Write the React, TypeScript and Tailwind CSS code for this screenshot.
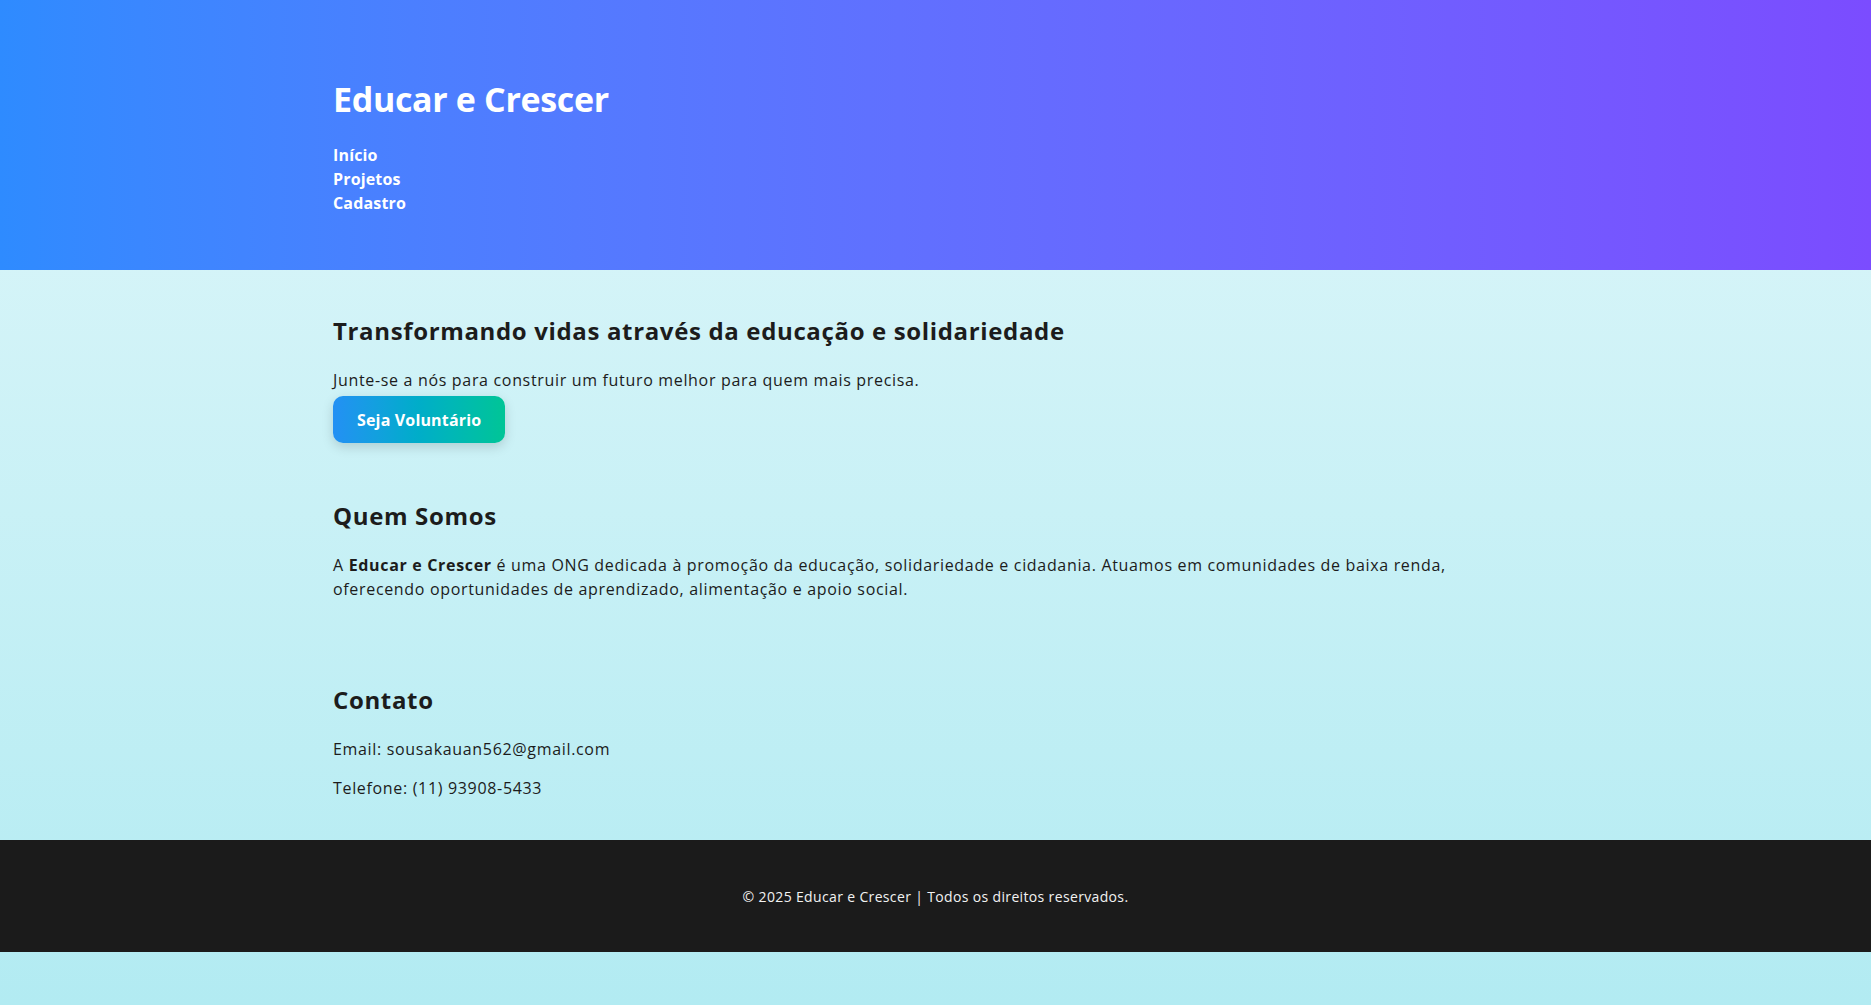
export default function App() {
  const font = { fontFamily: '"Open Sans", "Noto Sans", Arial, sans-serif' };

  return (
    <div
      className="min-h-screen bg-gradient-to-b from-[#e0f7fa] to-[#b2ebf2] text-[#1c1c1c]"
      style={font}
    >
      <header className="bg-gradient-to-r from-[#2e8bff] to-[#7b4cff] text-white">
        <div className="w-[1205px] mx-auto pt-[76px] pb-[55px]">
          <h1 className="text-[34px] leading-[46px] font-bold tracking-[-0.01em]">Educar e Crescer</h1>
          <nav className="mt-[21px]">
            <ul className="flex flex-col">
              <li>
                <a href="#inicio" className="text-[16px] leading-[24px] font-bold tracking-[0.01em]">
                  Início
                </a>
              </li>
              <li>
                <a href="#projetos" className="text-[16px] leading-[24px] font-bold tracking-[0.01em]">
                  Projetos
                </a>
              </li>
              <li>
                <a href="#cadastro" className="text-[16px] leading-[24px] font-bold tracking-[0.01em]">
                  Cadastro
                </a>
              </li>
            </ul>
          </nav>
        </div>
      </header>

      <main className="w-[1205px] mx-auto">
        <section className="pt-[43px]">
          <h2 className="text-[24px] leading-[36px] font-bold tracking-[0.027em]">
            Transformando vidas através da educação e solidariedade
          </h2>
          <p className="mt-[19px] text-[16px] leading-[24px] tracking-[0.042em]">
            Junte-se a nós para construir um futuro melhor para quem mais precisa.
          </p>
          <button className="mt-[4px] h-[47px] px-[24px] rounded-[10px] bg-gradient-to-r from-[#2390f4] to-[#00c596] text-white text-[16px] font-bold tracking-[0.01em] shadow-[0_4px_12px_rgba(0,0,0,0.15)]">
            Seja Voluntário
          </button>
        </section>

        <section className="pt-[55px]">
          <h2 className="text-[24px] leading-[36px] font-bold tracking-[0.027em]">Quem Somos</h2>
          <p className="mt-[19px] text-[16px] leading-[24px] tracking-[0.042em] pr-[40px]">
            A <strong className="font-bold">Educar e Crescer</strong> é uma ONG dedicada à promoção da
            educação, solidariedade e cidadania. Atuamos em comunidades de baixa renda, oferecendo
            oportunidades de aprendizado, alimentação e apoio social.
          </p>
        </section>

        <section className="pt-[81px] pb-[40px]">
          <h2 className="text-[24px] leading-[36px] font-bold tracking-[0.027em]">Contato</h2>
          <p className="mt-[19px] text-[16px] leading-[24px] tracking-[0.042em]">
            Email: sousakauan562@gmail.com
          </p>
          <p className="mt-[15px] text-[16px] leading-[24px] tracking-[0.042em]">
            Telefone: (11) 93908-5433
          </p>
        </section>
      </main>

      <footer className="h-[112px] bg-[#1b1b1b] flex items-center justify-center">
        <p className="text-[14px] leading-[21px] text-[#f2f2f2] tracking-[0.025em]">
          © 2025 Educar e Crescer | Todos os direitos reservados.
        </p>
      </footer>
    </div>
  );
}
